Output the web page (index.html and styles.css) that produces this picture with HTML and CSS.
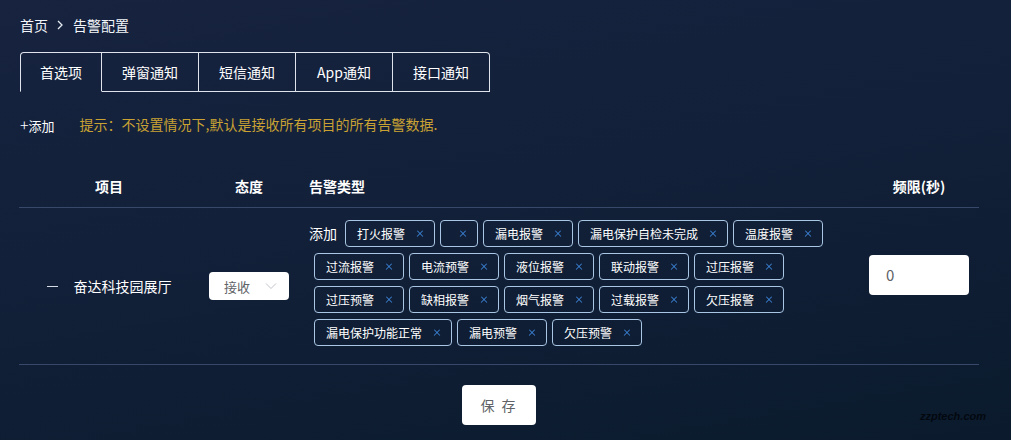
FILE: index.html
```html
<!DOCTYPE html>
<html lang="zh-CN">
<head>
    <meta charset="UTF-8">
    <meta name="viewport" content="width=device-width, initial-scale=1.0">
    <title>告警配置</title>
    <link rel="stylesheet" href="styles.css">
</head>
<body>
    <div class="crumbs">
        <span>首页</span>
        <svg class="crumb-arrow" width="8" height="10" viewBox="0 0 8 10"><polyline points="2,1 6,5 2,9" fill="none" stroke="#e6ebf2" stroke-width="1.3"/></svg>
        <span>告警配置</span>
    </div>

    <div class="tabs">
        <div class="tab active">首选项</div>
        <div class="tab">弹窗通知</div>
        <div class="tab">短信通知</div>
        <div class="tab">App通知</div>
        <div class="tab">接口通知</div>
    </div>

    <div class="toolbar">
        <span class="add-btn"><span class="plus">+</span>添加</span>
        <span class="hint">提示：不设置情况下,默认是接收所有项目的所有告警数据.</span>
    </div>

    <div class="grid head">
        <div class="cell center">项目</div>
        <div class="cell center">态度</div>
        <div class="cell types">告警类型</div>
        <div class="cell center">频限(秒)</div>
    </div>

    <div class="grid row">
        <div class="cell center">
            <span class="dash"></span>
            <span>奋达科技园展厅</span>
        </div>
        <div class="cell center">
            <div class="select">
                <span>接收</span>
                <svg width="12" height="8" viewBox="0 0 12 8"><polyline points="1,1.5 6,6.5 11,1.5" fill="none" stroke="#c0c4cc" stroke-width="1"/></svg>
            </div>
        </div>
        <div class="cell types">
            <div class="tag-list">
                <span class="tag-add">添加</span>
                <span class="tag">打火报警<i class="x"></i></span>
                <span class="tag"><i class="x"></i></span>
                <span class="tag">漏电报警<i class="x"></i></span>
                <span class="tag">漏电保护自检未完成<i class="x"></i></span>
                <span class="tag">温度报警<i class="x"></i></span>
                <span class="tag">过流报警<i class="x"></i></span>
                <span class="tag">电流预警<i class="x"></i></span>
                <span class="tag">液位报警<i class="x"></i></span>
                <span class="tag">联动报警<i class="x"></i></span>
                <span class="tag">过压报警<i class="x"></i></span>
                <span class="tag">过压预警<i class="x"></i></span>
                <span class="tag">缺相报警<i class="x"></i></span>
                <span class="tag">烟气报警<i class="x"></i></span>
                <span class="tag">过载报警<i class="x"></i></span>
                <span class="tag">欠压报警<i class="x"></i></span>
                <span class="tag">漏电保护功能正常<i class="x"></i></span>
                <span class="tag">漏电预警<i class="x"></i></span>
                <span class="tag">欠压预警<i class="x"></i></span>
            </div>
        </div>
        <div class="cell freq">
            <div class="num-input">0</div>
        </div>
    </div>

    <div class="actions">
        <button class="save-btn">保 存</button>
    </div>

    <div class="site-mark">zzptech.com</div>
</body>
</html>
```

FILE: styles.css
```css
*{
    margin: 0;
    padding: 0;
    box-sizing: border-box;
}
html{
    height: 100%;
}
body{
    min-height: 100%;
    padding: 16px 32px 0 19px;
    position: relative;
    background: linear-gradient(170deg, #17233f 0%, #122039 45%, #0b1b2d 100%);
    color: #fff;
    font-family: "Noto Sans CJK SC", "Noto Sans", sans-serif;
    font-size: 14px;
}

/* breadcrumb */
.crumbs{
    height: 18px;
    line-height: 18px;
    display: flex;
    align-items: center;
    color: #f2f5f9;
    padding-left: 1px;
}
.crumb-arrow{
    margin: 0 9px 0 8px;
}

/* notification tabs */
.tabs{
    display: flex;
    margin-top: 18px;
    padding-left: 1px;
}
.tab{
    width: 97px;
    height: 40px;
    line-height: 38px;
    text-align: center;
    border: 1px solid #dfe4ec;
    border-left: none;
    color: #fff;
}
.tab:first-child{
    width: 82px;
    border-left: 1px solid #dfe4ec;
    border-top-left-radius: 4px;
}
.tab:last-child{
    border-top-right-radius: 4px;
}
.tab.active{
    border-bottom-color: transparent;
}

.toolbar{
    margin-top: 22px;
    height: 20px;
    line-height: 20px;
    display: flex;
    padding-left: 1px;
}
.add-btn{
    color: #fff;
    font-size: 13px;
}
.plus{
    font-size: 16px;
    font-weight: 300;
}
.hint{
    margin-left: 25px;
    color: #c9a233;
}

/* table */
.grid{
    display: grid;
    grid-template-columns: 180px 100px 560px 120px;
    border-bottom: 1px solid #38486a;
}
.head{
    margin-top: 30px;
    height: 44px;
    font-weight: bold;
}
.cell{
    display: flex;
    align-items: center;
}
.center{
    justify-content: center;
}
.types{
    padding-left: 10px;
}
.row{
    padding: 12px 0;
}
.dash{
    width: 11px;
    height: 1px;
    background: #d6dce6;
    margin-right: 16px;
}
.select{
    width: 80px;
    height: 28px;
    background: #fff;
    border-radius: 4px;
    display: flex;
    align-items: center;
    justify-content: space-between;
    padding: 0 12px 0 15px;
    color: #606266;
    font-size: 13px;
}

.tag-list{
    display: flex;
    flex-wrap: wrap;
    align-items: flex-start;
}
.tag-add{
    line-height: 27px;
    margin-right: 3px;
    margin-bottom: 6px;
}
.tag{
    height: 27px;
    line-height: 25px;
    margin: 0 0 6px 5px;
    padding: 0 9px 0 11px;
    border: 1px solid #a9c6e4;
    border-radius: 4px;
    font-size: 12px;
    display: flex;
    align-items: center;
}
.x{
    width: 10px;
    height: 10px;
    margin-left: 10px;
    position: relative;
}
.x::before, .x::after{
    content: "";
    position: absolute;
    left: 0;
    top: 4.5px;
    width: 10px;
    height: 1.4px;
    background: #3f8ee8;
    transform: scale(0.8) rotate(45deg);
}
.x::after{
    transform: scale(0.8) rotate(-45deg);
}
.tag-list .tag:nth-child(3) .x{
    margin-left: 6px;
}

.freq{
    justify-content: center;
    align-items: flex-start;
}
.num-input{
    margin-top: 35px;
    width: 100px;
    height: 40px;
    line-height: 40px;
    background: #fff;
    border-radius: 4px;
    padding: 0 17px;
    color: #606266;
    font-size: 15px;
}

.actions{
    display: flex;
    justify-content: center;
    margin-top: 20px;
}
.save-btn{
    width: 74px;
    height: 40px;
    border: none;
    border-radius: 4px;
    background: #fff;
    color: #606266;
    font-family: inherit;
    font-size: 14px;
    letter-spacing: 2px;
}

.site-mark{
    position: absolute;
    right: 25px;
    top: 410px;
    font-size: 11px;
    font-weight: bold;
    font-style: italic;
    color: #03080f;
    font-family: "Liberation Sans", sans-serif;
}
```
